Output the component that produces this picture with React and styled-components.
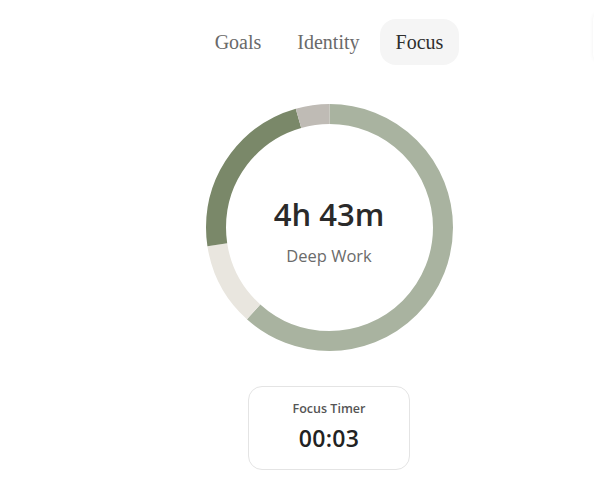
import React from 'react'
import styled, { createGlobalStyle } from 'styled-components'

const GlobalStyle = createGlobalStyle`
  html, body {
    margin: 0;
    padding: 0;
    background: #ffffff;
  }
  body {
    font-family: "Open Sans", "Noto Sans", sans-serif;
    overflow: hidden;
  }
`

const segments = [
  { value: 61.6, color: '#a9b3a0' },
  { value: 10.9, color: '#e9e6df' },
  { value: 23, color: '#7a8869' },
  { value: 4.5, color: '#bfbbb5' },
]

const tabs = ['Goals', 'Identity', 'Focus']

const Donut = () => {
  const r = 113.5
  const c = 2 * Math.PI * r
  let offset = 0
  return (
    <Ring viewBox="0 0 247 247">
      <g transform="rotate(-90 123.5 123.5)">
        {segments.map((s, i) => {
          const len = (s.value / 100) * c
          const el = (
            <circle
              key={i}
              cx="123.5"
              cy="123.5"
              r={r}
              fill="none"
              stroke={s.color}
              strokeWidth="20"
              strokeDasharray={`${len} ${c - len}`}
              strokeDashoffset={-offset}
            />
          )
          offset += len
          return el
        })}
      </g>
    </Ring>
  )
}

const App = () => {
  return (
    <Page>
      <GlobalStyle />
      <Main>
        <TabBar>
          {tabs.map((t) => (
            <Tab key={t} active={t === 'Focus'}>{t}</Tab>
          ))}
        </TabBar>
        <ChartWrap>
          <Donut />
          <Center>
            <Total>4h 43m</Total>
            <Label>Deep Work</Label>
          </Center>
        </ChartWrap>
        <TimerCard>
          <TimerTitle>Focus Timer</TimerTitle>
          <TimerValue>00:03</TimerValue>
        </TimerCard>
      </Main>
      <EdgePanel />
    </Page>
  )
}

const Page = styled.div`
  position: relative;
  width: 594px;
  height: 493px;
  overflow: hidden;
`
const Main = styled.div`
  display: flex;
  flex-direction: column;
  align-items: center;
  padding: 19px 0 0 64px;
`
const TabBar = styled.div`
  display: flex;
  gap: 4px;
`
const Tab = styled.div`
  height: 46px;
  padding: 0 16px;
  display: flex;
  align-items: center;
  border-radius: 16px;
  font-family: "Liberation Serif", "DejaVu Serif", serif;
  font-size: 20px;
  color: ${(p) => (p.active ? '#2e2e2e' : '#6a6a6a')};
  background: ${(p) => (p.active ? '#f5f5f5' : 'transparent')};
`
const ChartWrap = styled.div`
  position: relative;
  width: 247px;
  height: 247px;
  margin-top: 39px;
`
const Ring = styled.svg`
  display: block;
  width: 247px;
  height: 247px;
`
const Center = styled.div`
  position: absolute;
  inset: 0;
  display: flex;
  flex-direction: column;
  align-items: center;
  justify-content: center;
  padding-top: 8px;
`
const Total = styled.div`
  font-size: 31px;
  font-weight: 600;
  color: #2a2a2a;
  line-height: 1.2;
`
const Label = styled.div`
  margin-top: 11px;
  font-size: 16.5px;
  color: #6b6b6b;
`
const TimerCard = styled.div`
  margin-top: 35px;
  width: 160px;
  height: 80px;
  border: 1px solid #e4e4e4;
  border-radius: 14px;
  display: flex;
  flex-direction: column;
  align-items: center;
  justify-content: center;
  gap: 5px;
  padding-bottom: 2px;
`
const TimerTitle = styled.div`
  font-size: 12.5px;
  font-weight: 600;
  color: #555;
`
const TimerValue = styled.div`
  font-size: 23px;
  font-weight: 600;
  color: #222;
  letter-spacing: 0.3px;
`
const EdgePanel = styled.div`
  position: absolute;
  top: 12px;
  left: 593px;
  width: 40px;
  height: 50px;
  border-radius: 8px;
  box-shadow: 0 0 4px rgba(0, 0, 0, 0.06);
`

export default App
